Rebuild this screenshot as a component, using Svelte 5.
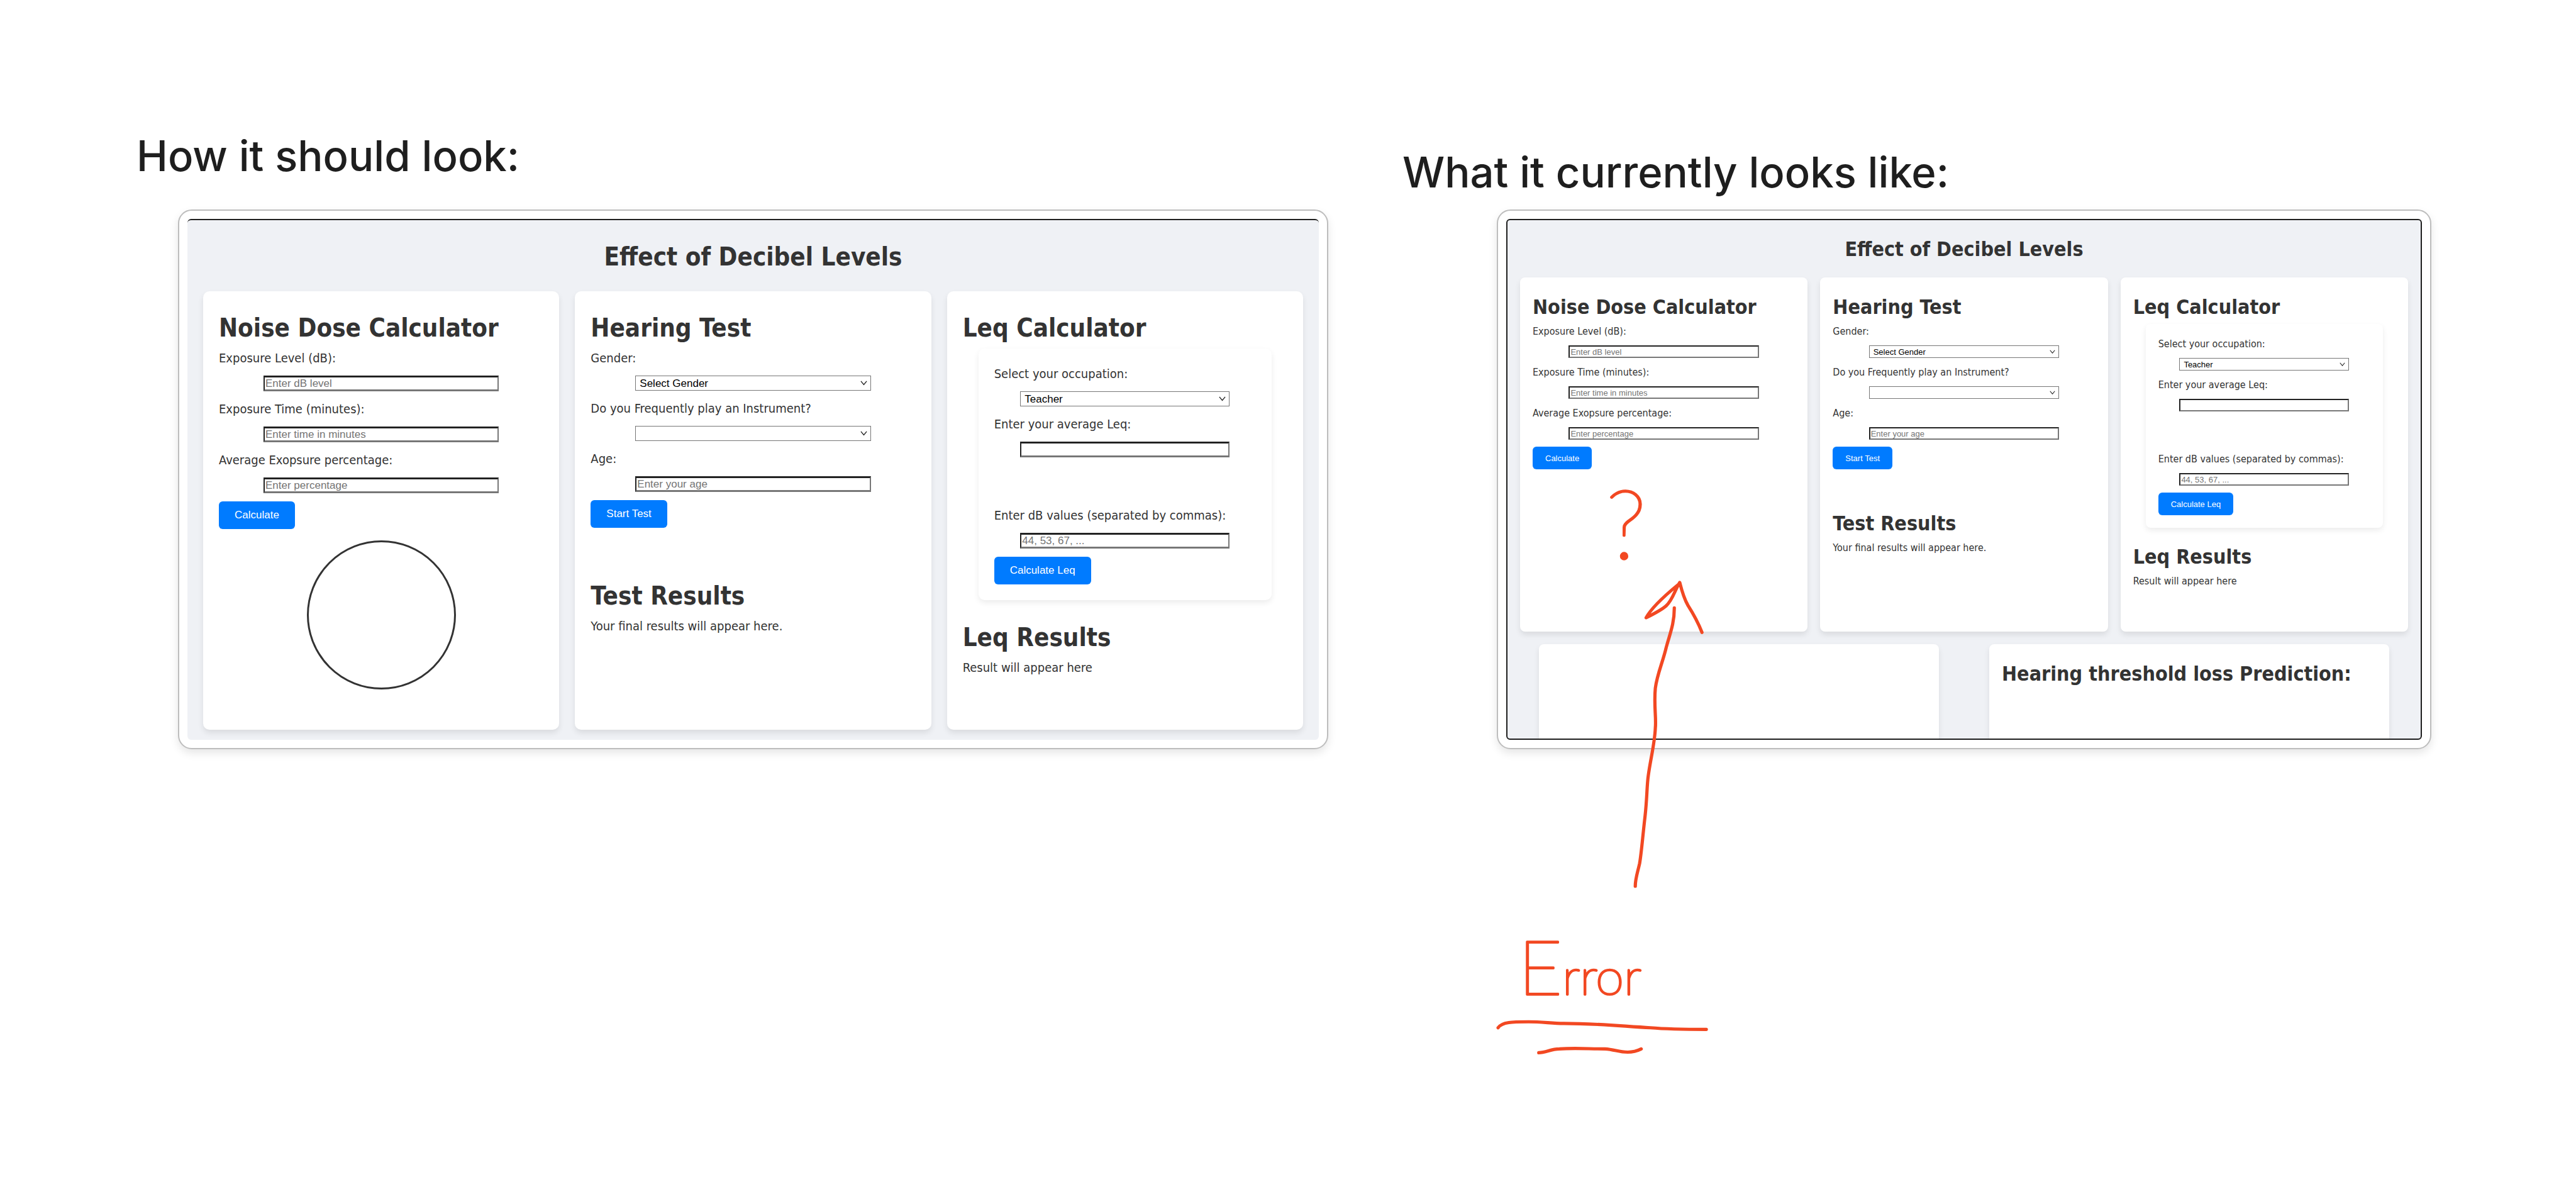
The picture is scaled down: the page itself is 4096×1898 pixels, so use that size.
<script>
  const boards = [
    { id: 'expected', title: 'How it should look:', gauge: true, more: false },
    { id: 'current', title: 'What it currently looks like:', gauge: false, more: true }
  ];
</script>

{#snippet field(id, label, placeholder)}
  <div class="field">
    <label for={id}>{label}</label>
    <input class="control" type="text" {id} {placeholder} />
  </div>
{/snippet}

{#snippet choice(id, label, option)}
  <div class="field">
    <label for={id}>{label}</label>
    <div class="control select">
      <select {id}><option>{option}</option></select>
      <svg class="chevron" viewBox="0 0 12 8" aria-hidden="true"><path d="M1 1 L6 7 L11 1" /></svg>
    </div>
  </div>
{/snippet}

<main class="canvas">
  {#each boards as board (board.id)}
    <section class="board {board.id}">
      <h1 class="caption">{board.title}</h1>
      <div class="frame">
        <div class="app">
          <h2 class="title">Effect of Decibel Levels</h2>
          <div class="cards">
            <article class="card">
              <h2>Noise Dose Calculator</h2>
              {@render field(board.id + '-level', 'Exposure Level (dB):', 'Enter dB level')}
              {@render field(board.id + '-time', 'Exposure Time (minutes):', 'Enter time in minutes')}
              {@render field(board.id + '-average', 'Average Exopsure percentage:', 'Enter percentage')}
              <button type="button">Calculate</button>
              {#if board.gauge}<div class="gauge"></div>{/if}
            </article>
            <article class="card">
              <h2>Hearing Test</h2>
              {@render choice(board.id + '-gender', 'Gender:', 'Select Gender')}
              {@render choice(board.id + '-instrument', 'Do you Frequently play an Instrument?', '')}
              {@render field(board.id + '-age', 'Age:', 'Enter your age')}
              <button type="button">Start Test</button>
              <h2 class="test-results">Test Results</h2>
              <p>Your final results will appear here.</p>
            </article>
            <article class="card">
              <h2>Leq Calculator</h2>
              <form class="leq">
                {@render choice(board.id + '-job', 'Select your occupation:', 'Teacher')}
                {@render field(board.id + '-leq', 'Enter your average Leq:', '')}
                <div class="spacer"></div>
                {@render field(board.id + '-values', 'Enter dB values (separated by commas):', '44, 53, 67, ...')}
                <button type="button">Calculate Leq</button>
              </form>
              <h2 class="leq-results">Leq Results</h2>
              <p>Result will appear here</p>
            </article>
          </div>
          {#if board.more}
            <div class="lower">
              <article class="card"></article>
              <article class="card"><h2>Hearing threshold loss Prediction:</h2></article>
            </div>
          {/if}
        </div>
      </div>
    </section>
  {/each}

  <svg class="notes" viewBox="0 0 4751 2201">
    <text class="question" x="2962" y="1030">?</text>
    <text x="2800" y="1834"><tspan class="initial">E</tspan><tspan class="rest">rror</tspan></text>
    <path d="M3088 1121 C3088 1150 3080 1168 3073 1194 C3067 1220 3056 1244 3053 1269 C3050 1300 3055 1325 3053 1342 C3052 1370 3044 1400 3040 1430 C3037 1450 3038 1475 3033 1514 C3029 1550 3027 1575 3024 1592 C3020 1610 3016 1620 3016 1634" />
    <path d="M3095 1078 C3078 1092 3046 1120 3036 1139 C3050 1132 3064 1125 3073 1117 C3085 1106 3088 1090 3098 1074 C3102 1090 3106 1104 3113 1116 C3120 1127 3130 1143 3139 1166" />
    <path d="M2763 1895 C2770 1884 2790 1884 2819 1884 C2845 1884 2862 1887 2884 1887 C2950 1887 3000 1893 3044 1895 C3080 1898 3110 1898 3147 1898" />
    <path d="M2838 1941 C2852 1941 2860 1934 2876 1934 C2905 1932 2930 1934 2960 1934 C2978 1935 2985 1940 3002 1940 C3014 1940 3021 1937 3027 1934" />
  </svg>
</main>

<style>
  :global(body) {
    margin: 0;
    background: #fff;
  }

  .canvas {
    position: relative;
    box-sizing: border-box;
    display: grid;
    grid-template-columns: 1895fr 1636fr;
    column-gap: 118px;
    align-content: start;
    align-items: end;
    min-height: 100vh;
    padding: 206px 230px 0 217px;
    color: #333;
    font-family: Tahoma, "DejaVu Sans Condensed", "DejaVu Sans", sans-serif;
  }

  .expected {
    --text: 20px;
    --line: 30px;
    --head: 40px;
    --head-line: 50px;
    --small: 17px;
    --gap: 25px;
    --step: 13px;
    --after: 13px;
    --input: 25px;
    --select: 24px;
    --head-top: 8px;
    --head-bottom: 8px;
    --title-top: 33px;
    --title-bottom: 30px;
    --button: 44px;
    --rim: 3px;
    --test-gap: 83px;
    --leq-gap: 34px;
    --spacer: 64px;
    --card: 697px;
    --radius: 10px;
    --indent: 66px;
    --drop: 43px;
  }

  .current {
    --text: 16px;
    --line: 24px;
    --head: 32px;
    --head-line: 40px;
    --small: 13px;
    --gap: 20px;
    --step: 10px;
    --after: 11px;
    --input: 20px;
    --select: 20px;
    --head-top: 7px;
    --head-bottom: 7px;
    --title-top: 26px;
    --title-bottom: 25px;
    --button: 36px;
    --rim: 2px;
    --test-gap: 66px;
    --leq-gap: 26px;
    --spacer: 53px;
    --card: 563px;
    --radius: 8px;
    --indent: 150px;
    --drop: 17px;
  }

  .caption {
    margin: 0 0 var(--drop);
    color: #1e1e1e;
    font: 450 67px/84px Inter, sans-serif;
    white-space: nowrap;
  }

  .frame {
    margin-left: var(--indent);
    padding: 13px;
    border: 2px solid #bdbdbd;
    border-radius: 22px;
    background: #fff;
    box-shadow: 0 6px 14px rgba(0, 0, 0, 0.1);
  }

  .app {
    box-sizing: border-box;
    padding: var(--title-top) var(--gap) 16px;
    border-top: 2px solid #1e1e1e;
    border-radius: 6px;
    background: #eff1f5;
    overflow: hidden;
  }

  .current .app {
    padding-bottom: 0;
    border: 2px solid #1e1e1e;
  }

  h2 {
    margin: var(--head-top) 0 var(--head-bottom);
    font-size: var(--head);
    line-height: var(--head-line);
    font-weight: 700;
    white-space: nowrap;
  }

  .title {
    margin: 0 0 var(--title-bottom);
    text-align: center;
  }

  .cards {
    display: grid;
    grid-template-columns: repeat(3, minmax(0, 1fr));
    gap: var(--gap);
  }

  .card {
    display: flow-root;
    box-sizing: border-box;
    min-height: var(--card);
    padding: var(--gap);
    border-radius: var(--radius);
    background: #fff;
    box-shadow: 0 5px 10px rgba(0, 0, 0, 0.09);
  }

  label,
  p {
    display: block;
    margin: 0;
    font-size: var(--text);
    line-height: var(--line);
    white-space: nowrap;
  }

  .field {
    margin-bottom: var(--after);
  }

  .control {
    display: block;
    box-sizing: border-box;
    width: 72.5%;
    height: var(--input);
    margin: var(--step) auto 0;
  }

  .leq .control {
    width: 80%;
  }

  input {
    padding: 0 1px;
    border: solid;
    border-width: var(--rim) 2px;
    border-color: #222 #777 #777 #222;
    border-radius: 0;
    background: #fff;
    color: #000;
    font: var(--small) "Liberation Sans", Arial, sans-serif;
  }

  input::placeholder {
    color: #757575;
    opacity: 1;
  }

  .select {
    display: grid;
    height: var(--select);
  }

  select {
    grid-area: 1 / 1;
    appearance: none;
    box-sizing: border-box;
    width: 100%;
    height: 100%;
    padding: 0 6px;
    border: 1px solid #767676;
    border-radius: 0;
    background: #fff;
    color: #000;
    font: var(--small) "Liberation Sans", Arial, sans-serif;
  }

  .chevron {
    grid-area: 1 / 1;
    place-self: center end;
    width: 11px;
    margin-right: 6px;
    fill: none;
    stroke: #222;
    stroke-width: 1.5;
    pointer-events: none;
  }

  .current .chevron {
    width: 9px;
  }

  button {
    display: block;
    height: var(--button);
    padding: 0 var(--gap);
    border: 0;
    border-radius: 6px;
    background: #007bff;
    color: #fff;
    font: var(--small) "Liberation Sans", Arial, sans-serif;
    white-space: nowrap;
  }

  .gauge {
    box-sizing: border-box;
    width: 237px;
    height: 237px;
    margin: 18px auto 0;
    border: 3px solid #333;
    border-radius: 50%;
  }

  .leq {
    margin: 0 var(--gap);
    padding: var(--gap);
    border-radius: var(--radius);
    box-shadow: 0 4px 10px rgba(0, 0, 0, 0.08);
  }

  .spacer {
    height: var(--spacer);
  }

  .test-results {
    margin-top: var(--test-gap);
  }

  .leq-results {
    margin-top: var(--leq-gap);
  }

  .lower {
    display: grid;
    grid-template-columns: 1fr 1fr;
    gap: 80px;
    margin-top: var(--gap);
    padding: 0 30px;
  }

  .lower .card {
    min-height: 150px;
    border-radius: var(--radius) var(--radius) 0 0;
  }

  .notes {
    position: absolute;
    top: 0;
    left: 0;
    width: 100%;
    aspect-ratio: 4751 / 2201;
    fill: none;
    stroke: #f24822;
    stroke-width: 6;
    stroke-linecap: round;
    stroke-linejoin: round;
    pointer-events: none;
  }

  .notes text {
    fill: #f24822;
    stroke-width: 4;
    font-family: Lato, sans-serif;
    font-weight: 100;
  }

  .question {
    font-size: 176px;
  }

  .initial {
    font-size: 140px;
  }

  .rest {
    font-size: 94px;
  }
</style>
